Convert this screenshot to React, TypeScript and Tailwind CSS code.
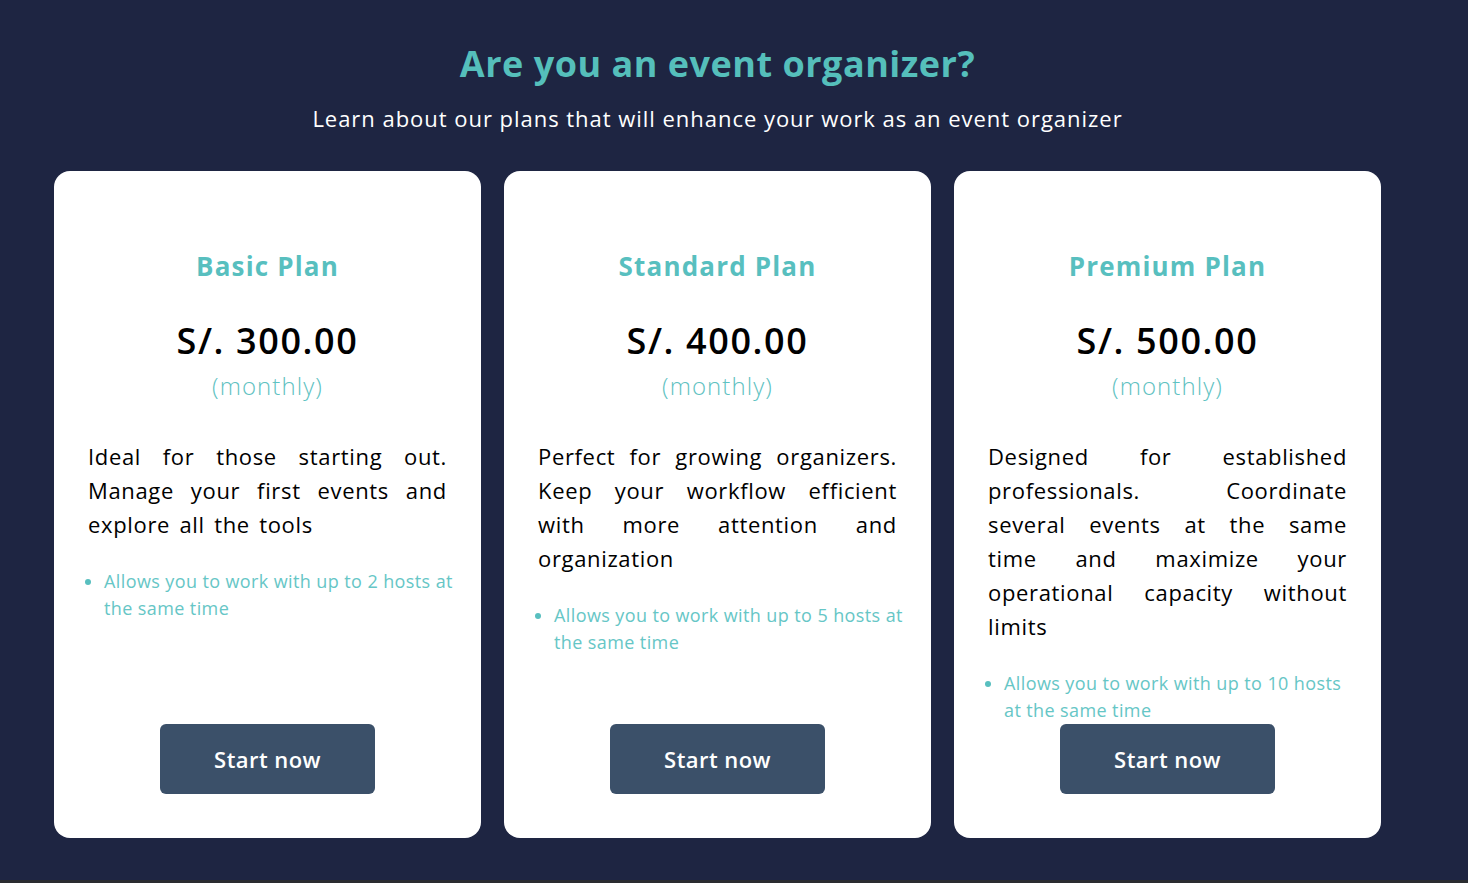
const plans = [
  {
    name: "Basic Plan",
    price: "S/. 300.00",
    text: "Ideal for those starting out. Manage your first events and explore all the tools",
    perk: "Allows you to work with up to 2 hosts at the same time",
  },
  {
    name: "Standard Plan",
    price: "S/. 400.00",
    text: "Perfect for growing organizers. Keep your workflow efficient with more attention and organization",
    perk: "Allows you to work with up to 5 hosts at the same time",
  },
  {
    name: "Premium Plan",
    price: "S/. 500.00",
    text: "Designed for established professionals. Coordinate several events at the same time and maximize your operational capacity without limits",
    perk: "Allows you to work with up to 10 hosts at the same time",
  },
];

function PlanCard({ plan }: { plan: (typeof plans)[number] }) {
  return (
    <div className="flex h-[667px] w-[427px] flex-col rounded-[16px] bg-white px-[34px] pt-[77px] pb-[44px]">
      <h2 className="text-center text-[26px] font-bold leading-[36px] tracking-[0.045em] text-[#58bfbf]">
        {plan.name}
      </h2>
      <p className="mt-[33px] text-center text-[36px] font-semibold leading-[48px] tracking-[0.045em] text-black">
        {plan.price}
      </p>
      <p className="mt-[5px] text-center text-[24px] font-light leading-[32px] tracking-[0.045em] text-[#5fc2c2]">
        (monthly)
      </p>
      <p className="mt-[37px] text-justify text-[22px] leading-[34px] tracking-[0.03em] text-black [word-spacing:3px]">
        {plan.text}
      </p>
      <ul className="mt-[27px] -mr-[10px] list-disc pl-[16px] text-[18px] leading-[27px] tracking-[0.022em] text-[#66c6c6] marker:text-[#58bfbf]">
        <li>{plan.perk}</li>
      </ul>
      <button className="mx-auto mt-auto h-[70px] w-[215px] shrink-0 rounded-[6px] bg-[#3b5069] text-[22px] font-semibold tracking-[0.02em] text-white">
        Start now
      </button>
    </div>
  );
}

export default function App() {
  return (
    <div
      className="flex min-h-screen flex-col bg-[#1e2542]"
      style={{ fontFamily: '"Open Sans", sans-serif' }}
    >
      <main className="flex-1 pt-[40px] pb-[42px]">
        <div className="w-[1435px]">
          <h1 className="text-center text-[36px] font-bold leading-[48px] tracking-[0.014em] text-[#55bfbb]">
            Are you an event organizer?
          </h1>
          <p className="mt-[15px] text-center text-[22px] leading-[30px] tracking-[0.044em] text-white">
            Learn about our plans that will enhance your work as an event organizer
          </p>
          <div className="mt-[38px] flex justify-center gap-[23px]">
            {plans.map((plan) => (
              <PlanCard key={plan.name} plan={plan} />
            ))}
          </div>
        </div>
      </main>
      <div className="h-[3px] bg-[#2a2c30]" />
    </div>
  );
}
